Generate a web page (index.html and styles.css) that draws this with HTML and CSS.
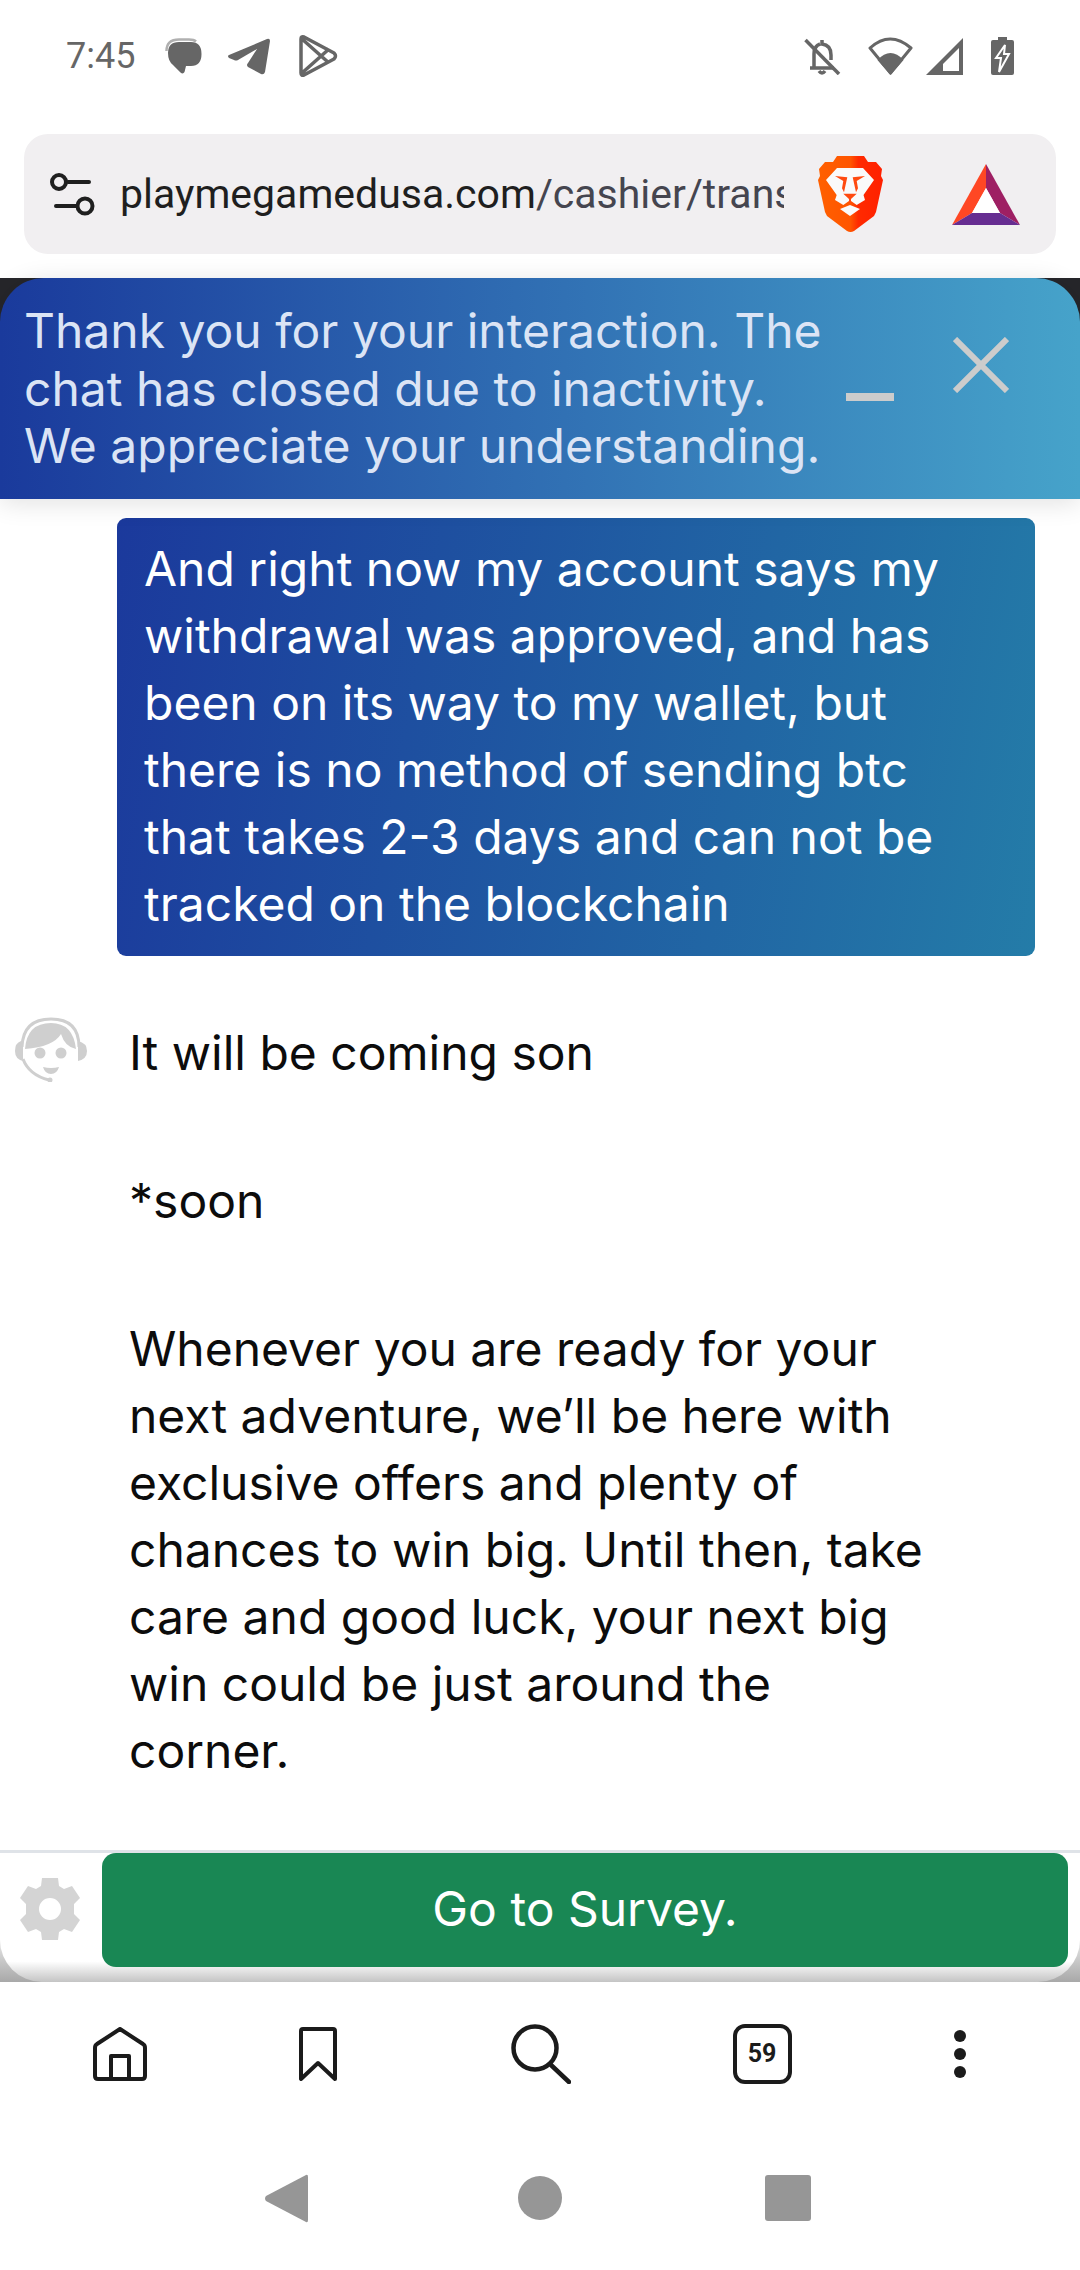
FILE: index.html
```html
<!DOCTYPE html>
<html lang="en">
<head>
    <meta charset="UTF-8">
    <meta name="viewport" content="width=device-width, initial-scale=1.0">
    <title>Chat</title>
    <link rel="stylesheet" href="styles.css">
</head>
<body>
    <div class="status-bar">
        <div class="status-left">
            <span class="clock">7:45</span>
            <svg class="ic-chat" viewBox="0 0 37 36"><path d="M1.500 13 Q1.500 1.500 14 1.500 H24 Q29 1.500 31 3.500" fill="none" stroke="#b0b0b0" stroke-width="2.500"/><path d="M3 15 Q3 4 14 4 H26 Q36.500 4 36.500 16 Q36.500 28 26 28 H21 L19.500 34 Q18 36.500 15.500 34.500 L8 27 Q3 23 3 15 Z" fill="#666"/></svg>
            <svg class="ic-plane" viewBox="0 0 42 37"><path d="M1 17 L39 1 Q42 0 42 3 L37 34 Q36 37 33 36 L20 29 Q18 27 20 25 L29 11 L10 22 Q8 23 6 22 L1 20 Q-1 18 1 17 Z" fill="#666"/></svg>
            <svg class="ic-play" viewBox="0 0 39 42"><path d="M2 4 Q2 1 5 2 L35 18 Q38 21 35 24 L5 40 Q2 41 2 38 Z M3 4 L30 28 M3 38 L30 14" fill="none" stroke="#666" stroke-width="3.500" stroke-linejoin="round"/></svg>
        </div>
        <div class="status-right">
            <svg class="ic-bell" viewBox="0 0 37 37"><path d="M6 30 H30 M10 30 V16 Q10 8 16 6 M18 2 V6 Q27 7 27 17 V22 M15 33 Q18 37 21 33" fill="none" stroke="#666" stroke-width="3.500"/><path d="M1.500 2 L35 36" stroke="#666" stroke-width="3.500"/></svg>
            <svg class="ic-wifi" viewBox="0 0 45 38"><path d="M2 11 Q22 -7 43 11 L22.500 36 Z" fill="#fff" stroke="#666" stroke-width="3" stroke-linejoin="round"/><path d="M22.500 38 L9.500 23 Q22.500 9 35.500 23 Z" fill="#666"/></svg>
            <svg class="ic-signal" viewBox="0 0 38 37"><path d="M0 37 L37 0 V37 Z" fill="#666"/><path d="M17 33 H33 V10 L17 26 Z" fill="#fff"/></svg>
            <svg class="ic-battery" viewBox="0 0 23 38"><path d="M7 0 H16 V3 H21 Q23 3 23 5 V36 Q23 38 21 38 H2 Q0 38 0 36 V5 Q0 3 2 3 H7 Z" fill="#666"/><path d="M14 8 L5 21 H10 L8 35 L18 17 H13 Z" fill="#666" stroke="#fff" stroke-width="2"/></svg>
        </div>
    </div>

    <div class="url-bar">
        <svg class="ic-tune" viewBox="0 0 46 44"><circle cx="9" cy="10" r="7" fill="none" stroke="#1f1f1f" stroke-width="4"/><path d="M18 10 H39 M6 34 H26" stroke="#1f1f1f" stroke-width="4" stroke-linecap="round"/><circle cx="35" cy="34" r="7.500" fill="none" stroke="#1f1f1f" stroke-width="4"/></svg>
        <div class="url-text"><span class="host">playmegamedusa.com</span>/cashier/transactions</div>
        <svg class="ic-brave" viewBox="0 0 65 77">
            <defs><linearGradient id="braveFill" x1="0" x2="1" y1="0" y2="0"><stop offset="0" stop-color="#ff6000"/><stop offset="0.5" stop-color="#ff5500"/><stop offset="0.62" stop-color="#ff2a00"/><stop offset="1" stop-color="#ff2000"/></linearGradient></defs>
            <path d="M19 0 H46 L50 6 L58 6 L64 13 L63 20 L65 24 L58 56 L56 60 L36 75 Q32.500 77 29 75 L9 60 L7 56 L0 24 L2 20 L1 13 L7 6 L15 6 Z" fill="url(#braveFill)"/>
            <path d="M19 12 H45 L56 24 L45.500 39 L47 44 L38.700 49 L33 45 H31 L25.300 49 L17 44 L18.700 39 L8 24 Z" fill="#fafafa"/>
            <path d="M17 20 L29.300 21.300 L26 36.300 L24 32.300 L25.300 25 Z M47 20 L34.700 21.300 L38 36.300 L40 32.300 L38.700 25 Z M25.300 37.700 H38.700 L33 43 V47 H31 V43 Z" fill="#ff4a10"/>
            <path d="M22 53 L32 49 L42 53 L32 60 Z" fill="#fafafa"/>
        </svg>
        <svg class="ic-bat" viewBox="0 0 68 61"><path d="M34 0 L0 61 L20 49 L34 24 Z" fill="#ff4724"/><path d="M34 0 L68 61 L48 49 L34 24 Z" fill="#9e1f63"/><path d="M0 61 H68 L48 49 H20 Z" fill="#662d91"/><path d="M34 24 L48 49 H20 Z" fill="#fff"/></svg>
    </div>

    <div class="chat-window">
        <div class="chat-banner">
            <div class="banner-text">Thank you for your interaction. The chat has closed due to inactivity. We appreciate your understanding.</div>
            <svg class="ic-minimize" viewBox="0 0 48 8"><rect width="48" height="8" fill="#ccc"/></svg>
            <svg class="ic-close" viewBox="0 0 56 56"><path d="M2 2 L54 54 M54 2 L2 54" stroke="#ccc" stroke-width="6"/></svg>
        </div>

        <div class="messages">
            <div class="bubble-user">And right now my account says my withdrawal was approved, and has been on its way to my wallet, but there is no method of sending btc that takes 2-3 days and can not be tracked on the blockchain</div>
            <div class="agent-row">
                <svg class="ic-agent" viewBox="0 0 72 65">
                    <path d="M7 30 Q8 2 36 2 Q64 2 64 30" fill="none" stroke="#cfcfcf" stroke-width="3"/>
                    <path d="M10 32 Q12 6 36 6 Q58 6 61 32 Q50 30 46 17 Q38 30 10 32 Z" fill="#cfcfcf"/>
                    <path d="M0 34 Q0 26 6 24 L8 24 V44 Q0 42 0 34 Z M63 24 Q72 26 72 34 Q72 42 63 44 Z" fill="#cfcfcf"/>
                    <path d="M8 42 Q14 58 34 63" fill="none" stroke="#cfcfcf" stroke-width="3"/>
                    <circle cx="35" cy="63" r="2.500" fill="#cfcfcf"/>
                    <circle cx="25" cy="36" r="5.500" fill="#cfcfcf"/><circle cx="46" cy="36" r="5.500" fill="#cfcfcf"/>
                    <path d="M28 50 Q36 52 44 50 Q42 57 36 57 Q30 57 28 50 Z" fill="#cfcfcf"/>
                </svg>
                <div class="agent-text">
                    <p>It will be coming son</p>
                    <p>*soon</p>
                    <p>Whenever you are ready for your next adventure, we’ll be here with exclusive offers and plenty of chances to win big. Until then, take care and good luck, your next big win could be just around the corner.</p>
                </div>
            </div>
        </div>

        <div class="chat-footer">
            <div class="footer-inner">
                <svg class="ic-gear" viewBox="0 0 62 62"><path fill-rule="evenodd" d="M23 0 H39 L40 8 L45 11 L53 8 L61 20 L55 26 V36 L61 42 L53 54 L45 51 L40 54 L39 62 H23 L22 54 L17 51 L9 54 L1 42 L7 36 V26 L1 20 L9 8 L17 11 L22 8 Z M31 20 A11 11 0 1 0 31 42 A11 11 0 1 0 31 20 Z" fill="#d4d4d4"/></svg>
                <div class="survey-btn">Go to Survey.</div>
            </div>
        </div>
    </div>

    <div class="toolbar">
        <div class="tool"><svg class="ic-home" viewBox="0 0 54 54"><path d="M27 2 L50 17 Q52 18 52 21 V49 Q52 52 49 52 H5 Q2 52 2 49 V21 Q2 18 4 17 Z M18 52 V29 H36 V52" fill="none" stroke="#1b1b1b" stroke-width="4" stroke-linejoin="round"/></svg></div>
        <div class="tool"><svg class="ic-bookmark" viewBox="0 0 38 54"><path d="M2 4 Q2 2 4 2 H34 Q36 2 36 4 V52 L19 36 L2 52 Z" fill="none" stroke="#1b1b1b" stroke-width="4" stroke-linejoin="round"/></svg></div>
        <div class="tool"><svg class="ic-search" viewBox="0 0 60 60"><circle cx="24" cy="24" r="21.500" fill="none" stroke="#1b1b1b" stroke-width="4.500"/><path d="M40 41 L58 58" stroke="#1b1b1b" stroke-width="4.500" stroke-linecap="round"/></svg></div>
        <div class="tool"><div class="tab-count">59</div></div>
        <div class="tool"><div class="dots"><i></i><i></i><i></i></div></div>
    </div>

    <div class="nav-bar">
        <div class="nav-cell"><svg class="ic-back" viewBox="0 0 43 49"><path d="M41 1 Q43 0 43 3 V46 Q43 49 41 48 L1 27 Q-1 24.500 1 22 Z" fill="#969696"/></svg></div>
        <div class="nav-cell"><div class="nav-circle"></div></div>
        <div class="nav-cell"><div class="nav-square"></div></div>
    </div>
</body>
</html>
```

FILE: styles.css
```css
body {
    margin: 0;
    width: 1080px;
    height: 2270px;
    overflow: hidden;
    background: #fff;
    font-family: 'Inter', sans-serif;
}

svg {
    display: block;
    flex: none;
}

/* status bar */
.status-bar {
    height: 112px;
    padding: 0 66px;
    box-sizing: border-box;
    display: flex;
    justify-content: space-between;
    align-items: center;
}

.status-left, .status-right {
    display: flex;
    align-items: center;
}

.clock {
    font-family: 'Roboto', sans-serif;
    font-size: 36px;
    color: #666;
    margin-right: 30px;
}

.ic-chat { width: 37px; height: 36px; margin-right: 26px; }
.ic-plane { width: 42px; height: 37px; margin-right: 29px; }
.ic-play { width: 39px; height: 42px; }
.ic-bell { width: 37px; height: 37px; margin-right: 27px; }
.ic-wifi { width: 45px; height: 38px; margin-right: 13px; }
.ic-signal { width: 38px; height: 37px; margin-right: 27px; }
.ic-battery { width: 23px; height: 38px; }

/* address bar */
.url-bar {
    height: 120px;
    margin: 22px 24px 24px;
    background: #f1eff1;
    border-radius: 24px;
    display: flex;
    align-items: center;
}

.ic-tune { width: 46px; height: 44px; margin-left: 26px; }

.url-text {
    width: 664px;
    margin-left: 24px;
    overflow: hidden;
    white-space: nowrap;
    font-family: 'Roboto', sans-serif;
    font-size: 41px;
    color: #45454f;
}

.host {
    color: #1f1f1f;
}

.ic-brave { width: 65px; height: 77px; margin-left: 34px; }
.ic-bat { width: 68px; height: 61px; margin-left: 69px; }

/* chat */
.chat-window {
    height: 1704px;
    background: #26262a;
    display: flex;
    flex-direction: column;
}

.chat-banner {
    position: relative;
    z-index: 2;
    height: 221px;
    box-sizing: border-box;
    padding: 24px 0 0 24px;
    border-radius: 44px 44px 0 0;
    background: linear-gradient(90deg, #1a3a9c, #46a3ca);
    box-shadow: 0 4px 26px rgba(0, 0, 0, 0.12);
    display: flex;
    flex: none;
}

.banner-text {
    width: 800px;
    margin-right: 22px;
    font-size: 48px;
    line-height: 57.5px;
    color: #dbe4f5;
}

.ic-minimize { width: 48px; height: 8px; margin-top: 91px; }
.ic-close { width: 56px; height: 56px; margin: 35px 0 0 59px; }

.messages {
    flex: 1;
    min-height: 0;
    overflow: hidden;
    background: #fff;
    padding-top: 19px;
}

.bubble-user {
    width: 918px;
    height: 438px;
    margin-left: 117px;
    box-sizing: border-box;
    padding: 17px 27px;
    border-radius: 9px;
    background: linear-gradient(100deg, #1b399c, #247ca8);
    color: #fff;
    font-size: 48px;
    line-height: 67px;
}

.agent-row {
    display: flex;
    margin-top: 61px;
    padding-left: 15px;
}

.ic-agent { width: 72px; height: 65px; }

.agent-text {
    width: 800px;
    margin-left: 42px;
    padding-top: 2px;
    font-size: 48px;
    line-height: 67px;
    color: #0c0c0c;
}

.agent-text p {
    margin: 0 0 81px;
}

/* survey footer */
.chat-footer {
    height: 132px;
    flex: none;
    box-sizing: border-box;
    border-top: 3px solid #dfe3e8;
    background: linear-gradient(180deg, #fff 55%, #a8a8a8 100%);
}

.footer-inner {
    height: 100%;
    box-sizing: border-box;
    padding-left: 19px;
    border-radius: 0 0 42px 42px;
    background: linear-gradient(180deg, #fff 84%, #c4c4c4 100%);
    display: flex;
    align-items: flex-start;
}

.ic-gear { width: 62px; height: 62px; margin-top: 25px; }

.survey-btn {
    width: 966px;
    height: 114px;
    margin-left: 21px;
    border-radius: 14px;
    background: #198754;
    color: #fff;
    font-size: 48px;
    line-height: 112px;
    text-align: center;
}

/* bottom toolbar */
.toolbar {
    height: 144px;
    padding-left: 21px;
    display: grid;
    grid-template-columns: 198px 198px 248px 194px 202px;
    align-items: center;
    justify-items: center;
}

.tool {
    display: flex;
    align-items: center;
    justify-content: center;
}

.ic-home { width: 54px; height: 54px; }
.ic-bookmark { width: 38px; height: 54px; }
.ic-search { width: 60px; height: 60px; }

.tab-count {
    width: 59px;
    height: 60px;
    box-sizing: border-box;
    border: 4px solid #1b1b1b;
    border-radius: 12px;
    font-family: 'Roboto', sans-serif;
    font-weight: 700;
    font-size: 25px;
    line-height: 52px;
    text-align: center;
    color: #1b1b1b;
}

.dots {
    display: flex;
    flex-direction: column;
    gap: 6px;
}

.dots i {
    display: block;
    width: 12px;
    height: 12px;
    border-radius: 50%;
    background: #1b1b1b;
}

/* android nav */
.nav-bar {
    height: 144px;
    padding-left: 159px;
    display: grid;
    grid-template-columns: 254px 254px 242px;
    align-items: center;
    justify-items: center;
}

.nav-cell {
    display: flex;
}

.ic-back { width: 43px; height: 49px; }

.nav-circle {
    width: 44px;
    height: 44px;
    border-radius: 50%;
    background: #969696;
}

.nav-square {
    width: 46px;
    height: 46px;
    border-radius: 3px;
    background: #969696;
}
```
